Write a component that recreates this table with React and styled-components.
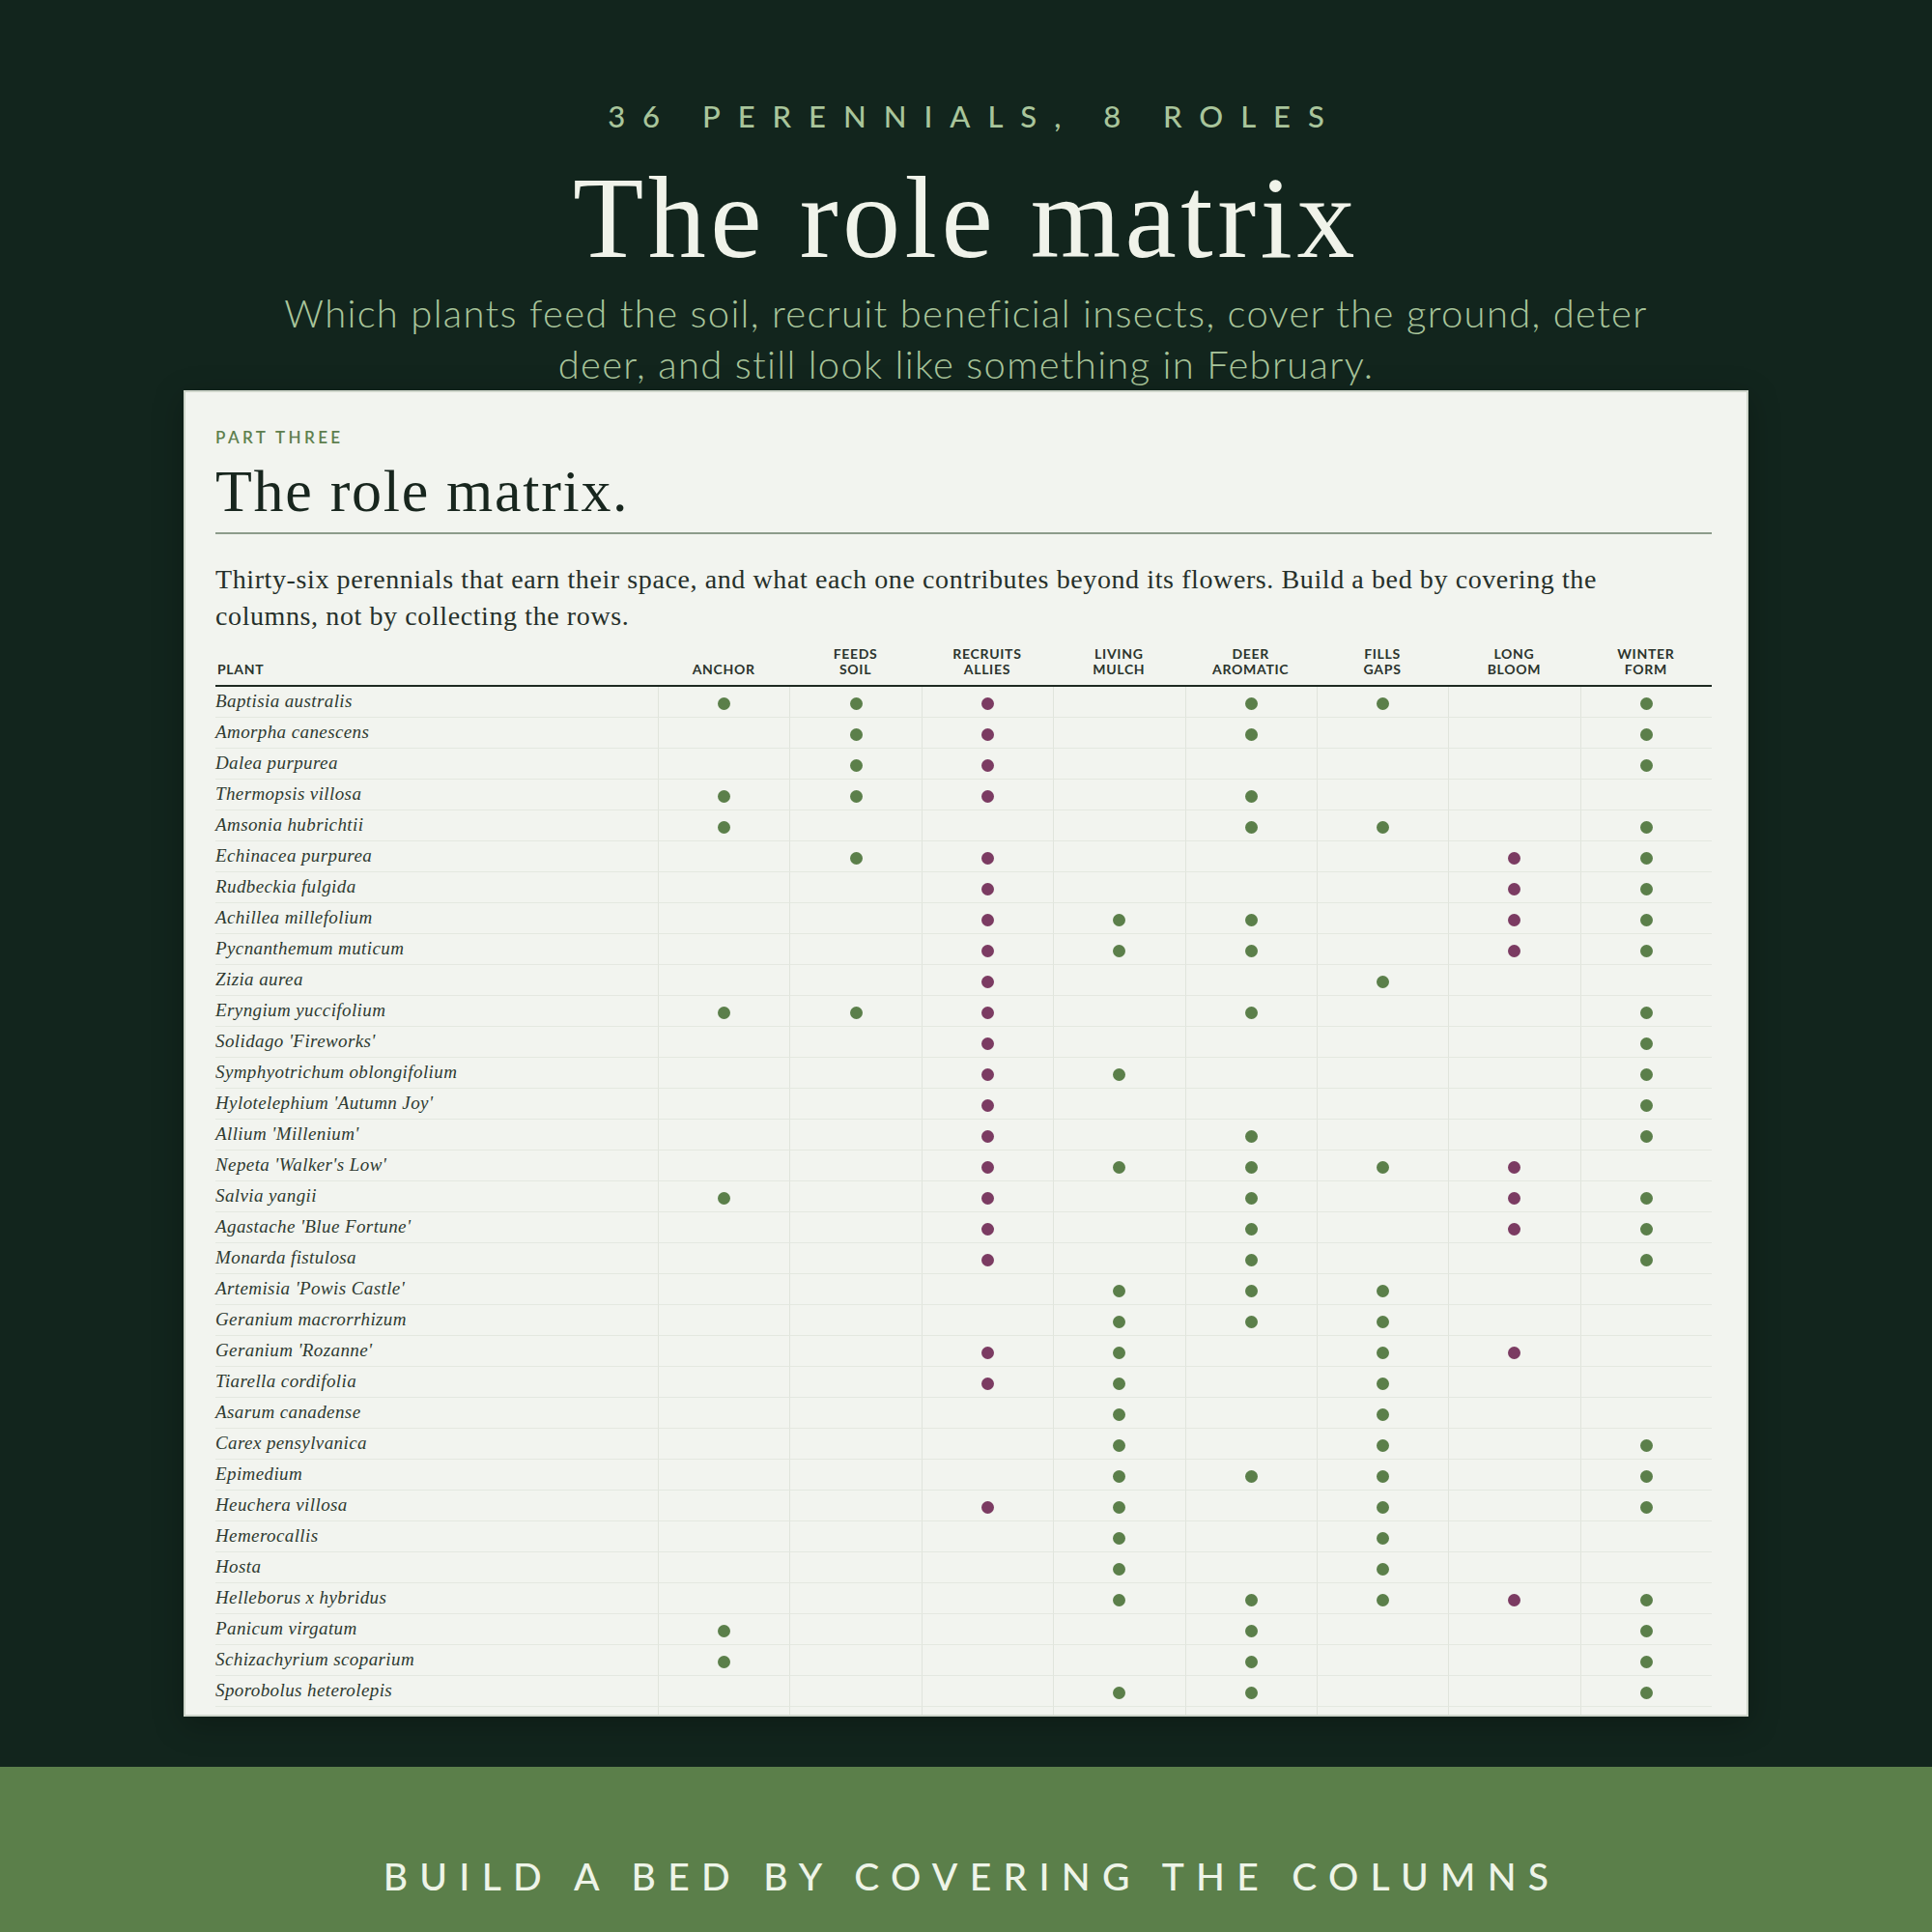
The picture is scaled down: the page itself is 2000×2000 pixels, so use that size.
import React from "react"
import styled, { createGlobalStyle } from "styled-components"

const ink = "#18261e"
const leaf = "#5b7f4a"
const plum = "#7b3b62"
const night = "#12251d"

const GlobalStyle = createGlobalStyle`
  html, body {
    margin: 0;
    padding: 0;
    background: ${night};
  }
  * {
    box-sizing: border-box;
  }
`

const Page = styled.div`
  width: 2000px;
  height: 2000px;
  background: ${night};
  display: flex;
  flex-direction: column;
  align-items: center;
  overflow: hidden;
`

const Eyebrow = styled.div`
  margin-top: 105px;
  padding-left: 18px;
  font-family: Lato, "Open Sans", sans-serif;
  font-size: 31px;
  line-height: 1;
  font-weight: 500;
  letter-spacing: 18px;
  color: #a9c59b;
`

const Title = styled.h1`
  margin: 30px 0 0;
  font-family: "Liberation Serif", "Times New Roman", serif;
  font-weight: 400;
  font-size: 120px;
  line-height: 1;
  letter-spacing: 4.5px;
  color: #f0f3ea;
`

const Lede = styled.p`
  margin: 12px 0 0;
  width: 1460px;
  text-align: center;
  font-family: Lato, "Open Sans", sans-serif;
  font-weight: 300;
  font-size: 40px;
  line-height: 53px;
  letter-spacing: 1.3px;
  color: #a9c59b;
`

const Card = styled.section`
  width: 1620px;
  height: 1373px;
  flex-shrink: 0;
  background: #f2f4ef;
  border: 2px solid #cfd6cb;
  padding: 38px 36px 0 31px;
  overflow: hidden;
  box-shadow: 0 8px 30px rgba(0, 0, 0, 0.25);
`

const Kicker = styled.div`
  font-family: Lato, "Open Sans", sans-serif;
  font-size: 17px;
  line-height: 1;
  font-weight: 600;
  letter-spacing: 0.2em;
  color: #5e7f4e;
`

const Heading = styled.h2`
  margin: 16px 0 0;
  padding-bottom: 12px;
  border-bottom: 2px solid #8d9c8b;
  font-family: "Liberation Serif", "Times New Roman", serif;
  font-weight: 400;
  font-size: 62px;
  line-height: 62px;
  letter-spacing: 1.7px;
  color: ${ink};
`

const Intro = styled.p`
  margin: 28px 0 0;
  max-width: 1490px;
  font-family: "Liberation Serif", "Times New Roman", serif;
  font-size: 28px;
  line-height: 38px;
  letter-spacing: 0.6px;
  color: #26302a;
`

const Matrix = styled.div`
  margin-top: 12px;
  display: grid;
  grid-template-columns: 458px repeat(8, 1fr);
`

const HeadCell = styled.div`
  display: flex;
  align-items: flex-end;
  justify-content: ${(p) => (p.$left ? "flex-start" : "center")};
  padding: 0 0 8px ${(p) => (p.$left ? "2px" : "0")};
  border-bottom: 2px solid #1f2a22;
  font-family: Lato, "Open Sans", sans-serif;
  font-weight: 700;
  font-size: 14px;
  line-height: 16px;
  letter-spacing: 0.05em;
  text-align: center;
  color: #2b342d;
`

const NameCell = styled.div`
  height: 32px;
  display: flex;
  align-items: center;
  padding-bottom: 2px;
  border-bottom: 1px solid #e4e8e0;
  font-family: "Liberation Serif", "Times New Roman", serif;
  font-style: italic;
  font-size: 19px;
  letter-spacing: 0.4px;
  color: #2e3a31;
  white-space: nowrap;
`

const RoleCell = styled.div`
  height: 32px;
  display: flex;
  align-items: center;
  justify-content: center;
  padding-top: 3px;
  border-left: 1px solid #e0e4dc;
  border-bottom: 1px solid #e4e8e0;
`

const Dot = styled.span`
  width: 13px;
  height: 13px;
  border-radius: 50%;
  background: ${(p) => (p.$plum ? plum : leaf)};
`

const Band = styled.footer`
  margin-top: auto;
  width: 100%;
  height: 171px;
  flex-shrink: 0;
  background: ${leaf};
  display: flex;
  justify-content: center;
  padding-top: 94px;
`

const BandText = styled.div`
  padding-left: 12px;
  font-family: Lato, "Open Sans", sans-serif;
  font-size: 39px;
  line-height: 1;
  font-weight: 500;
  letter-spacing: 12.3px;
  color: #eef4e8;
`

const roles = [
  ["ANCHOR"],
  ["FEEDS", "SOIL"],
  ["RECRUITS", "ALLIES"],
  ["LIVING", "MULCH"],
  ["DEER", "AROMATIC"],
  ["FILLS", "GAPS"],
  ["LONG", "BLOOM"],
  ["WINTER", "FORM"],
]

// recruits allies + long bloom are marked in plum
const plumCols = [2, 6]

const plants = [
  ["Baptisia australis", "11101101"],
  ["Amorpha canescens", "01101001"],
  ["Dalea purpurea", "01100001"],
  ["Thermopsis villosa", "11101000"],
  ["Amsonia hubrichtii", "10001101"],
  ["Echinacea purpurea", "01100011"],
  ["Rudbeckia fulgida", "00100011"],
  ["Achillea millefolium", "00111011"],
  ["Pycnanthemum muticum", "00111011"],
  ["Zizia aurea", "00100100"],
  ["Eryngium yuccifolium", "11101001"],
  ["Solidago 'Fireworks'", "00100001"],
  ["Symphyotrichum oblongifolium", "00110001"],
  ["Hylotelephium 'Autumn Joy'", "00100001"],
  ["Allium 'Millenium'", "00101001"],
  ["Nepeta 'Walker's Low'", "00111110"],
  ["Salvia yangii", "10101011"],
  ["Agastache 'Blue Fortune'", "00101011"],
  ["Monarda fistulosa", "00101001"],
  ["Artemisia 'Powis Castle'", "00011100"],
  ["Geranium macrorrhizum", "00011100"],
  ["Geranium 'Rozanne'", "00110110"],
  ["Tiarella cordifolia", "00110100"],
  ["Asarum canadense", "00010100"],
  ["Carex pensylvanica", "00010101"],
  ["Epimedium", "00011101"],
  ["Heuchera villosa", "00110101"],
  ["Hemerocallis", "00010100"],
  ["Hosta", "00010100"],
  ["Helleborus x hybridus", "00011111"],
  ["Panicum virgatum", "10001001"],
  ["Schizachyrium scoparium", "10001001"],
  ["Sporobolus heterolepis", "00011001"],
  ["Nassella tenuissima", "00001101"],
]

function RoleMatrix() {
  return (
    <Matrix>
      <HeadCell $left>PLANT</HeadCell>
      {roles.map((r) => (
        <HeadCell key={r.join("-")}>
          <span>
            {r.map((line, i) => (
              <React.Fragment key={line}>
                {i > 0 && <br />}
                {line}
              </React.Fragment>
            ))}
          </span>
        </HeadCell>
      ))}
      {plants.map(([name, marks]) => (
        <React.Fragment key={name}>
          <NameCell>{name}</NameCell>
          {marks.split("").map((m, i) => (
            <RoleCell key={i}>
              {m === "1" && <Dot $plum={plumCols.includes(i)} />}
            </RoleCell>
          ))}
        </React.Fragment>
      ))}
    </Matrix>
  )
}

export default function App() {
  return (
    <>
      <GlobalStyle />
      <Page>
        <Eyebrow>36 PERENNIALS, 8 ROLES</Eyebrow>
        <Title>The role matrix</Title>
        <Lede>
          Which plants feed the soil, recruit beneficial insects, cover the
          ground, deter deer, and still look like something in February.
        </Lede>
        <Card>
          <Kicker>PART THREE</Kicker>
          <Heading>The role matrix.</Heading>
          <Intro>
            Thirty-six perennials that earn their space, and what each one
            contributes beyond its flowers. Build a bed by covering the
            columns, not by collecting the rows.
          </Intro>
          <RoleMatrix />
        </Card>
        <Band>
          <BandText>BUILD A BED BY COVERING THE COLUMNS</BandText>
        </Band>
      </Page>
    </>
  )
}
